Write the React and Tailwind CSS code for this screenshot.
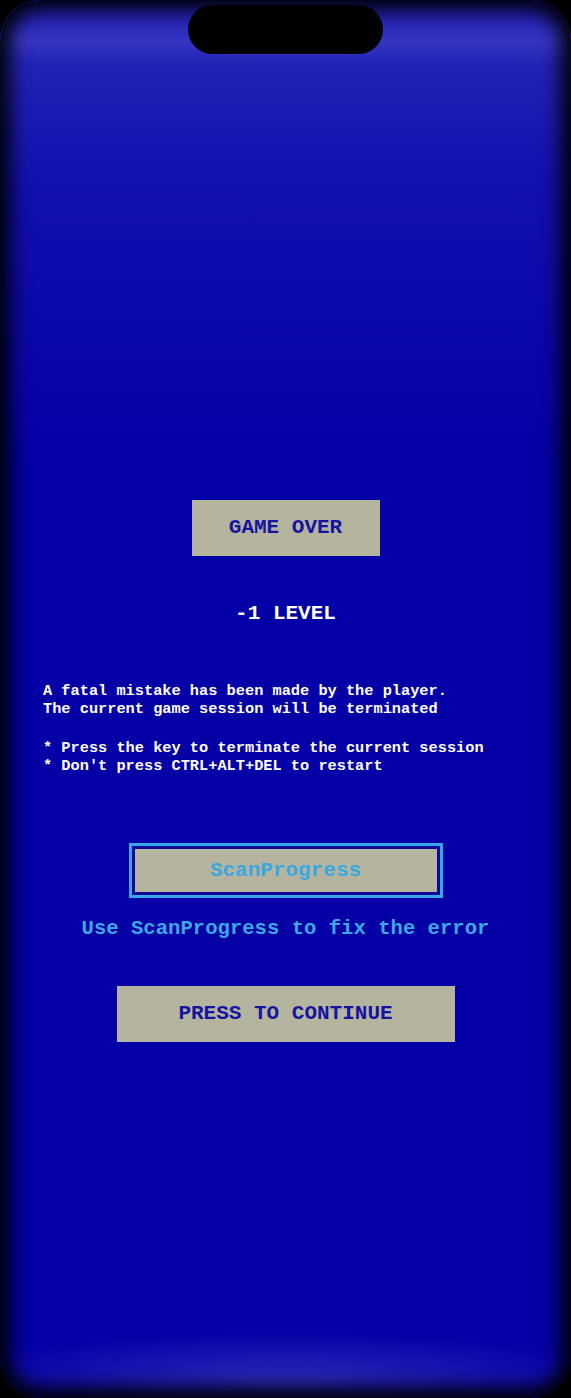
export default function App() {
  const mono = "font-['Liberation_Mono','DejaVu_Sans_Mono',monospace]";

  return (
    <div className="w-[571px] h-[1398px] bg-black overflow-hidden">
      <div
        className={`relative w-full h-full rounded-[40px] bg-[#0400a6] overflow-hidden ${mono}`}
      >
        {/* top glow under the bezel */}
        <div className="pointer-events-none absolute inset-x-0 top-0 h-[460px] bg-[linear-gradient(180deg,#1a18b4_0%,#3535c2_9%,#2222b6_14%,#1210ae_40%,rgba(4,0,166,0)_100%)]" />
        {/* bottom glow */}
        <div className="pointer-events-none absolute inset-x-0 bottom-0 h-[120px] bg-[radial-gradient(ellipse_60%_40%_at_50%_85%,#2a2ab8_0%,rgba(4,0,166,0)_100%)]" />

        <div className="relative flex flex-col items-center pt-[500px]">
          <div className="flex h-[56px] w-[188px] items-center justify-center bg-[#b5b59f] text-[21px] font-bold text-[#1414a0]">
            GAME OVER
          </div>

          <div className="mt-[46px] text-[21px] leading-[24px] font-bold text-white">
            -1 LEVEL
          </div>

          <div className="mt-[56px] w-full pl-[43px] text-[15.3px] leading-[18px] font-bold text-white">
            <p>A fatal mistake has been made by the player.</p>
            <p>The current game session will be terminated</p>
            <p className="mt-[21px]">* Press the key to terminate the current session</p>
            <p>* Don't press CTRL+ALT+DEL to restart</p>
          </div>

          <div className="mt-[68px] h-[55px] w-[314px] border-[3px] border-[#3ba6e6] bg-[#0a0a96] p-[3px]">
            <div className="flex h-full w-full items-center justify-center bg-[#b5b59f] text-[21px] font-bold text-[#3aa8e0]">
              ScanProgress
            </div>
          </div>

          <div className="mt-[19px] text-[20.6px] leading-[24px] font-bold text-[#3ea8e4]">
            Use ScanProgress to fix the error
          </div>

          <div className="mt-[45px] flex h-[56px] w-[338px] items-center justify-center bg-[#b5b59f] text-[21px] font-bold text-[#1414a0]">
            PRESS TO CONTINUE
          </div>
        </div>

        {/* dark bezel edge */}
        <div className="pointer-events-none absolute inset-0 rounded-[40px] shadow-[inset_0_0_20px_10px_#000]" />

        {/* camera notch */}
        <div className="absolute left-[188px] top-[5px] h-[49px] w-[195px] rounded-full bg-black" />
      </div>
    </div>
  );
}
